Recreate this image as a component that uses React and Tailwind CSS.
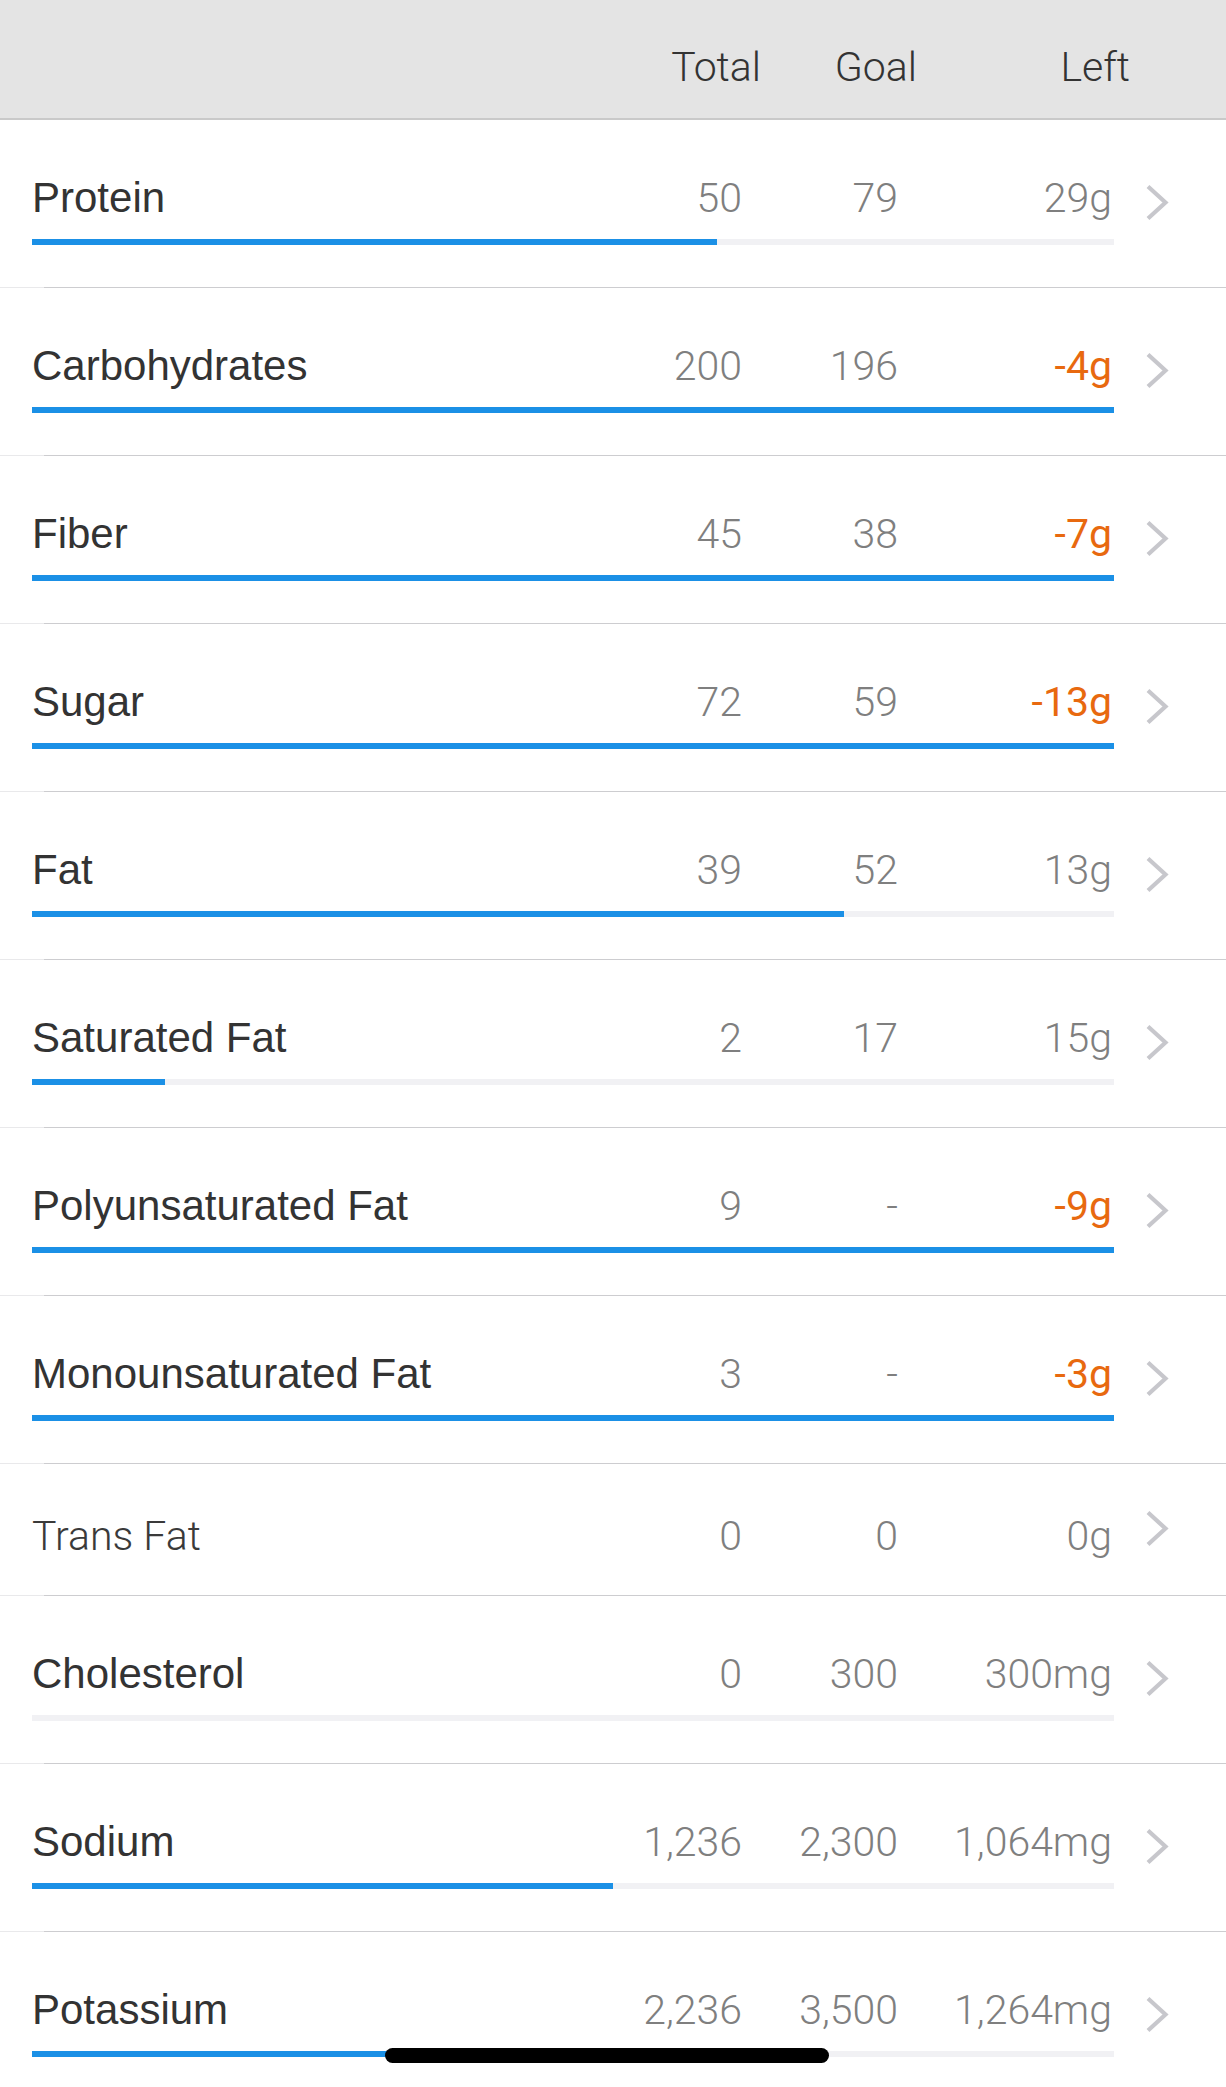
import React from "react";

const NUTRIENTS = [
  { name: "Protein", total: "50", goal: "79", left: "29g", pct: 50 / 79 },
  { name: "Carbohydrates", total: "200", goal: "196", left: "-4g", pct: 1, over: true },
  { name: "Fiber", total: "45", goal: "38", left: "-7g", pct: 1, over: true },
  { name: "Sugar", total: "72", goal: "59", left: "-13g", pct: 1, over: true },
  { name: "Fat", total: "39", goal: "52", left: "13g", pct: 39 / 52 },
  { name: "Saturated Fat", total: "2", goal: "17", left: "15g", pct: 0.123 },
  { name: "Polyunsaturated Fat", total: "9", goal: "-", left: "-9g", pct: 1, over: true },
  { name: "Monounsaturated Fat", total: "3", goal: "-", left: "-3g", pct: 1, over: true },
  { name: "Trans Fat", total: "0", goal: "0", left: "0g", noBar: true },
  { name: "Cholesterol", total: "0", goal: "300", left: "300mg", pct: 0 },
  { name: "Sodium", total: "1,236", goal: "2,300", left: "1,064mg", pct: 1236 / 2300 },
  { name: "Potassium", total: "2,236", goal: "3,500", left: "1,264mg", pct: 2236 / 3500 },
];

const label = "font-['Liberation_Sans',Arial,sans-serif] text-[42px]";
const roboto = "font-['Roboto','Liberation_Sans',sans-serif] text-[41px]";

function Chevron({ className }) {
  return (
    <svg width="24" height="37" viewBox="0 0 24 37" className={className}>
      <polyline points="3,2.5 20.5,18.5 3,34.5" fill="none" stroke="#c7c7cc" strokeWidth="4.2" />
    </svg>
  );
}

function Separator() {
  return (
    <div className="flex h-px">
      <div className="w-[44px] bg-[#e9e9eb]" />
      <div className="flex-1 bg-[#cdcdd0]" />
    </div>
  );
}

function Row({ n }) {
  const short = n.noBar;
  return (
    <div>
      <div className={`flex items-start pl-[32px] pr-[57px] ${short ? "h-[131px]" : "h-[167px]"}`}>
        <div className="flex-1">
          <div className={`flex items-baseline leading-[48px] ${short ? "pt-[48px]" : "pt-[54px]"}`}>
            <div className={`flex-1 ${short ? `${roboto} font-light text-[#3a3a3a]` : `${label} text-[#333]`}`}>{n.name}</div>
            <div className={`w-[156px] pr-[2px] text-right font-light text-[#7f7f7f] ${roboto}`}>{n.total}</div>
            <div className={`w-[156px] pr-[2px] text-right font-light text-[#7f7f7f] ${roboto}`}>{n.goal}</div>
            <div className={`w-[214px] pr-[2px] text-right ${roboto} ${n.over ? "font-normal text-[#e8690f]" : "font-light text-[#7f7f7f]"}`}>{n.left}</div>
          </div>
          {!short ? (
            <div className="mt-[17px] h-[6px] bg-[#f1f1f4]">
              <div className="h-full bg-[#1b90e6]" style={{ width: `${Math.min(n.pct, 1) * 100}%` }} />
            </div>
          ) : null}
        </div>
        <Chevron className={`ml-[31px] shrink-0 ${short ? "mt-[46px]" : "mt-[64px]"}`} />
      </div>
      <Separator />
    </div>
  );
}

export default function App() {
  return (
    <div className="relative min-h-[2087px] w-[1226px] bg-white">
      {/* column header */}
      <div className="h-[120px] border-b-[2px] border-[#c9c9c9] bg-[#e4e4e4]">
        <div className={`flex items-baseline pl-[32px] pr-[96px] pt-[43px] leading-[48px] font-light text-[#333] ${roboto}`}>
          <div className="flex-1" />
          <div className="w-[156px] text-right">Total</div>
          <div className="w-[156px] text-right">Goal</div>
          <div className="w-[213px] text-right">Left</div>
        </div>
      </div>

      {NUTRIENTS.map((n) => (
        <Row key={n.name} n={n} />
      ))}

      {/* home indicator */}
      <div className="fixed bottom-[24px] left-[385px] h-[15px] w-[444px] rounded-full bg-black" />
    </div>
  );
}
